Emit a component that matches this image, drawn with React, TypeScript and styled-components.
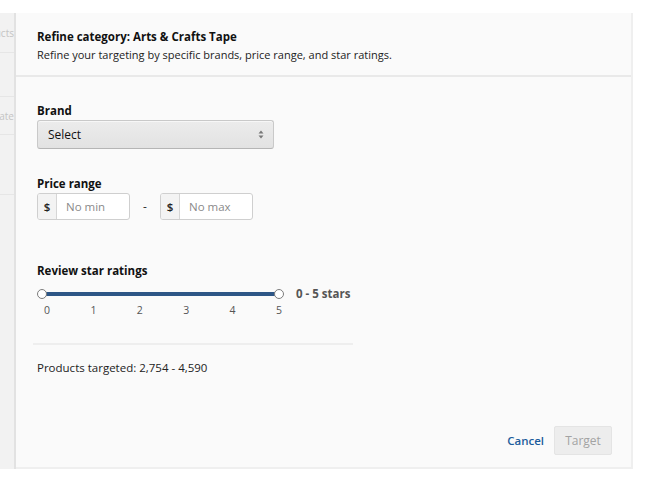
import React from "react";
import styled, { createGlobalStyle } from "styled-components";

const Global = createGlobalStyle`
  html, body { margin: 0; padding: 0; background: #ffffff; }
  body { font-family: "Open Sans", "Noto Sans", Arial, sans-serif; color: #111; }
  * { box-sizing: border-box; }
`;

const Page = styled.div`
  width: 650px;
  height: 482px;
  padding-top: 13px;
  display: flex;
  background: #fff;
`;

const Behind = styled.div`
  width: 16px;
  height: 456px;
  background: #f2f2f2;
  border-right: 2px solid #e2e2e2;
  display: flex;
  flex-direction: column;
  overflow: hidden;
`;

const BehindRow = styled.div<{ $h: number }>`
  height: ${(p) => p.$h}px;
  border-bottom: 1px solid #e6e6e6;
  font-size: 10px;
  color: #c4c4c4;
  display: flex;
  align-items: center;
  justify-content: flex-end;
  white-space: nowrap;
  overflow: hidden;
`;

const Modal = styled.div`
  width: 617px;
  height: 456px;
  background: #fafafa;
  border-right: 2px solid #efefef;
  border-bottom: 2px solid #efefef;
  display: flex;
  flex-direction: column;
`;

const Header = styled.div`
  height: 64px;
  padding: 16px 0 0 21px;
  border-bottom: 2px solid #e9e9e9;
`;

const Title = styled.div`
  font-size: 11.5px;
  font-weight: 700;
  line-height: 16px;
  color: #111;
`;

const Subtitle = styled.div`
  font-size: 11px;
  line-height: 16px;
  color: #222;
  margin-top: 2px;
`;

const Body = styled.div`
  flex: 1;
  padding: 26px 21px 0 21px;
  display: flex;
  flex-direction: column;
`;

const Label = styled.div`
  font-size: 11.5px;
  font-weight: 700;
  line-height: 16px;
  color: #111;
  margin-bottom: 1px;
`;

const Section = styled.div<{ $mb: number }>`
  margin-bottom: ${(p) => p.$mb}px;
`;

const SelectBox = styled.div`
  width: 237px;
  height: 29px;
  border: 1px solid #c9c9c9;
  border-bottom-color: #b5b5b5;
  border-radius: 3px;
  background: linear-gradient(#ececec, #e2e2e2);
  box-shadow: 0 1px 0 rgba(255,255,255,0.6) inset;
  display: flex;
  align-items: center;
  justify-content: space-between;
  padding: 0 9px 0 10px;
  font-size: 12px;
  color: #111;
`;

const PriceRow = styled.div`
  display: flex;
  align-items: center;
  margin-top: 1px;
`;

const PriceInput = styled.div`
  width: 93px;
  height: 27px;
  border: 1px solid #cfcfcf;
  border-radius: 3px;
  background: #fff;
  display: flex;
  overflow: hidden;
`;

const Prefix = styled.div`
  width: 19px;
  background: #f3f3f3;
  border-right: 1px solid #d6d6d6;
  display: flex;
  align-items: center;
  justify-content: center;
  font-size: 11.5px;
  font-weight: 600;
  color: #222;
`;

const Placeholder = styled.div`
  padding-left: 9px;
  display: flex;
  align-items: center;
  font-size: 11.5px;
  color: #8a8a8a;
`;

const Dash = styled.div`
  width: 30px;
  text-align: center;
  font-size: 12px;
  color: #333;
`;

const SliderRow = styled.div`
  display: flex;
  align-items: flex-start;
  gap: 12px;
  margin-top: 10px;
`;

const SliderCol = styled.div`
  width: 247px;
  display: flex;
  flex-direction: column;
`;

const Track = styled.div`
  position: relative;
  height: 10px;
  display: flex;
  align-items: center;
`;

const Fill = styled.div`
  flex: 1;
  height: 4px;
  margin: 0 4px;
  background: #2d5686;
  border-radius: 1px;
`;

const Handle = styled.div<{ $side: "left" | "right" }>`
  position: absolute;
  top: 0;
  ${(p) => (p.$side === "left" ? "left: 0;" : "right: 0;")}
  width: 10px;
  height: 10px;
  border-radius: 50%;
  border: 1.5px solid #7c7c7c;
  background: #fff;
`;

const Ticks = styled.div`
  display: flex;
  justify-content: space-between;
  padding: 0 2px 0 7px;
  margin-top: 4px;
  font-size: 10.5px;
  color: #555;
`;

const StarsLabel = styled.div`
  font-size: 11.5px;
  font-weight: 700;
  color: #555;
  line-height: 10px;
`;

const Divider = styled.div`
  width: 320px;
  height: 2px;
  margin-left: -4px;
  background: #eeeeee;
  margin-top: 26px;
  margin-bottom: 15px;
`;

const Targeted = styled.div`
  font-size: 11.5px;
  color: #222;
`;

const Footer = styled.div`
  display: flex;
  justify-content: flex-end;
  align-items: center;
  gap: 10px;
  padding: 0 19px 12px 0;
`;

const CancelLink = styled.a`
  font-size: 11.5px;
  font-weight: 600;
  color: #1c5c9c;
  text-decoration: none;
`;

const TargetButton = styled.button`
  width: 58px;
  height: 29px;
  border: 1px solid #e4e4e4;
  border-radius: 2px;
  background: #ededed;
  color: #a3a3a3;
  font-family: inherit;
  font-size: 12px;
`;

const UpDown = () => (
  <svg width="6" height="9" viewBox="0 0 6 9">
    <path d="M3 0.5 L5.5 3.5 H0.5 Z" fill="#777" />
    <path d="M3 8.5 L5.5 5.5 H0.5 Z" fill="#777" />
  </svg>
);

export default function App() {
  return (
    <>
      <Global />
      <Page>
        <Behind>
          <BehindRow $h={40}>ucts</BehindRow>
          <BehindRow $h={44}></BehindRow>
          <BehindRow $h={38}>ate</BehindRow>
          <BehindRow $h={60}></BehindRow>
        </Behind>
        <Modal>
          <Header>
            <Title>Refine category: Arts &amp; Crafts Tape</Title>
            <Subtitle>Refine your targeting by specific brands, price range, and star ratings.</Subtitle>
          </Header>
          <Body>
            <Section $mb={27}>
              <Label>Brand</Label>
              <SelectBox>
                <span>Select</span>
                <UpDown />
              </SelectBox>
            </Section>
            <Section $mb={43}>
              <Label>Price range</Label>
              <PriceRow>
                <PriceInput>
                  <Prefix>$</Prefix>
                  <Placeholder>No min</Placeholder>
                </PriceInput>
                <Dash>-</Dash>
                <PriceInput>
                  <Prefix>$</Prefix>
                  <Placeholder>No max</Placeholder>
                </PriceInput>
              </PriceRow>
            </Section>
            <Section $mb={0}>
              <Label>Review star ratings</Label>
              <SliderRow>
                <SliderCol>
                  <Track>
                    <Fill />
                    <Handle $side="left" />
                    <Handle $side="right" />
                  </Track>
                  <Ticks>
                    {[0, 1, 2, 3, 4, 5].map((n) => (
                      <span key={n}>{n}</span>
                    ))}
                  </Ticks>
                </SliderCol>
                <StarsLabel>0 - 5 stars</StarsLabel>
              </SliderRow>
            </Section>
            <Divider />
            <Targeted>Products targeted: 2,754 - 4,590</Targeted>
          </Body>
          <Footer>
            <CancelLink href="#">Cancel</CancelLink>
            <TargetButton>Target</TargetButton>
          </Footer>
        </Modal>
      </Page>
    </>
  );
}
